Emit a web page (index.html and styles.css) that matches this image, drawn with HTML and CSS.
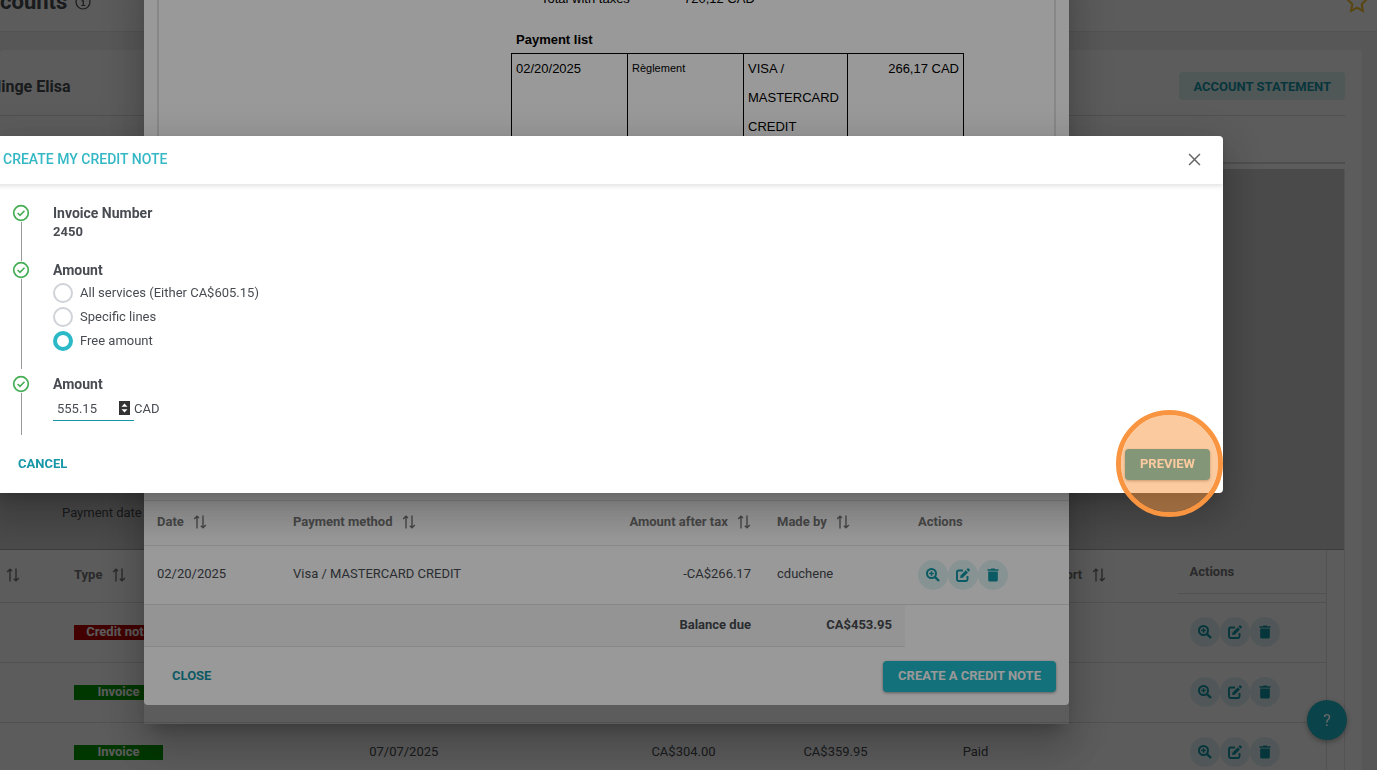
FILE: index.html
```html
<!DOCTYPE html>
<html lang="en">
<head>
  <meta charset="utf-8">
  <title>Create my credit note</title>
  <link rel="stylesheet" href="styles.css">
</head>
<body>

  <!-- shared icons -->
  <svg class="sprite" aria-hidden="true">
    <symbol id="sort" viewBox="0 0 14 14">
      <path d="M4 13.500V1.500M1.200 4L4 1.200L6 3M10 .5v12M7.800 10.800L10 12.800L12.800 10" fill="none" stroke="currentColor" stroke-width="1.400"/>
    </symbol>
    <symbol id="zoom" viewBox="0 0 14 14">
      <circle cx="5.500" cy="5.500" r="4.500" fill="none" stroke="currentColor" stroke-width="2"/>
      <path d="M8.800 8.800L13 13" stroke="currentColor" stroke-width="2.400"/>
      <path d="M5.500 3.200v4.600M3.200 5.500h4.600" stroke="currentColor" stroke-width="1.500"/>
    </symbol>
    <symbol id="edit" viewBox="0 0 14 14">
      <path d="M7 2.500H2.500Q1 2.500 1 4v7.500Q1 13 2.500 13H10q1.500 0 1.500-1.500V8" fill="none" stroke="currentColor" stroke-width="1.900"/>
      <path d="M4.500 7.500L9.800 2.200L12 4.400L6.700 9.700L4.200 10zM10.500 1.500L11.500.6Q12.200 0 12.900.7L13.500 1.300Q14.100 2 13.500 2.700L12.700 3.700z" fill="currentColor"/>
    </symbol>
    <symbol id="trash" viewBox="0 0 14 14">
      <path d="M1.500 1.300H4.800L5.300.5H8.700L9.200 1.300H12.500V2.700H1.500zM2.200 3.600H11.800V12Q11.800 13.500 10.300 13.500H3.700Q2.200 13.500 2.200 12z" fill="currentColor"/>
    </symbol>
    <symbol id="check" viewBox="0 0 18 18">
      <circle cx="9" cy="9" r="7.300" fill="none" stroke="currentColor" stroke-width="1.700"/>
      <path d="M5.600 9L8 11.300L12.500 6.800" fill="none" stroke="currentColor" stroke-width="1.600"/>
    </symbol>
  </svg>

  <div class="page">
    <header class="page-header">
      <h1>counts
        <svg class="info" viewBox="0 0 16 16"><circle cx="8" cy="8" r="7" fill="none" stroke="currentColor" stroke-width="1.200"/><path d="M6.500 6.800H8.300V11.500M6.300 11.500H10.200M8 3.800V5.200" fill="none" stroke="currentColor" stroke-width="1.200"/></svg>
      </h1>
      <svg class="star" viewBox="0 0 24 24"><path d="M12 2.500L14.900 8.600L21.600 9.500L16.700 14.100L17.900 20.800L12 17.600L6.100 20.800L7.300 14.100L2.400 9.500L9.100 8.600z" fill="none" stroke="currentColor" stroke-width="2"/></svg>
    </header>

    <main class="account">
      <div class="account-title">
        <h2>linge Elisa</h2>
        <button class="btn btn-light">ACCOUNT STATEMENT</button>
      </div>
      <div class="account-tabs"></div>
      <div class="account-content">
        <div class="filters">
          <span>Payment date</span>
        </div>
        <table class="grid operations">
          <colgroup>
            <col class="w-first"><col class="w-type"><col><col class="w-amount"><col class="w-total"><col class="w-status"><col class="w-export"><col class="w-actions">
          </colgroup>
          <thead>
            <tr>
              <th><svg class="sort"><use href="#sort"/></svg></th>
              <th>Type <svg class="sort"><use href="#sort"/></svg></th>
              <th></th>
              <th></th>
              <th></th>
              <th></th>
              <th class="right">Export <svg class="sort"><use href="#sort"/></svg></th>
              <th class="sticky"><div>Actions</div></th>
            </tr>
          </thead>
          <tbody>
            <tr>
              <td></td>
              <td><span class="tag tag-credit">Credit note</span></td>
              <td></td><td></td><td></td><td></td><td></td>
              <td>
                <div class="actions">
                  <button class="icon-btn" aria-label="View"><svg><use href="#zoom"/></svg></button>
                  <button class="icon-btn" aria-label="Edit"><svg><use href="#edit"/></svg></button>
                  <button class="icon-btn" aria-label="Delete"><svg><use href="#trash"/></svg></button>
                </div>
              </td>
            </tr>
            <tr>
              <td></td>
              <td><span class="tag tag-invoice">Invoice</span></td>
              <td></td><td></td><td></td><td></td><td></td>
              <td>
                <div class="actions">
                  <button class="icon-btn" aria-label="View"><svg><use href="#zoom"/></svg></button>
                  <button class="icon-btn" aria-label="Edit"><svg><use href="#edit"/></svg></button>
                  <button class="icon-btn" aria-label="Delete"><svg><use href="#trash"/></svg></button>
                </div>
              </td>
            </tr>
            <tr>
              <td></td>
              <td><span class="tag tag-invoice">Invoice</span></td>
              <td class="center">07/07/2025</td>
              <td class="center">CA$304.00</td>
              <td class="center">CA$359.95</td>
              <td class="center">Paid</td>
              <td></td>
              <td>
                <div class="actions">
                  <button class="icon-btn" aria-label="View"><svg><use href="#zoom"/></svg></button>
                  <button class="icon-btn" aria-label="Edit"><svg><use href="#edit"/></svg></button>
                  <button class="icon-btn" aria-label="Delete"><svg><use href="#trash"/></svg></button>
                </div>
              </td>
            </tr>
          </tbody>
        </table>
      </div>
    </main>
  </div>

  <div class="backdrop"></div>
  <button class="help" aria-label="Help">?</button>

  <!-- invoice dialog -->
  <div class="layer layer-top">
    <div class="dialog-shell">
      <section class="dialog invoice">
        <div class="preview">
          <div class="sheet">
            <div class="sheet-total"><span>Total with taxes</span><span>720,12 CAD</span></div>
            <h3>Payment list</h3>
            <table class="payments">
              <tr>
                <td>02/20/2025</td>
                <td class="small">Règlement</td>
                <td class="narrow">VISA / MASTERCARD CREDIT</td>
                <td class="right">266,17 CAD</td>
              </tr>
            </table>
          </div>
        </div>
        <table class="grid">
          <colgroup>
            <col class="w-date"><col><col class="w-after-tax"><col class="w-made-by"><col class="w-tools">
          </colgroup>
          <thead>
            <tr>
              <th>Date <svg class="sort"><use href="#sort"/></svg></th>
              <th>Payment method <svg class="sort"><use href="#sort"/></svg></th>
              <th class="right">Amount after tax <svg class="sort"><use href="#sort"/></svg></th>
              <th>Made by <svg class="sort"><use href="#sort"/></svg></th>
              <th>Actions</th>
            </tr>
          </thead>
          <tbody>
            <tr>
              <td>02/20/2025</td>
              <td>Visa / MASTERCARD CREDIT</td>
              <td class="right">-CA$266.17</td>
              <td>cduchene</td>
              <td class="tools">
                <div class="actions">
                  <button class="icon-btn" aria-label="View"><svg><use href="#zoom"/></svg></button>
                  <button class="icon-btn" aria-label="Edit"><svg><use href="#edit"/></svg></button>
                  <button class="icon-btn" aria-label="Delete"><svg><use href="#trash"/></svg></button>
                </div>
              </td>
            </tr>
            <tr class="balance">
              <td colspan="3" class="right">Balance due</td>
              <td class="right">CA$453.95</td>
            </tr>
          </tbody>
        </table>
        <footer class="dialog-footer">
          <button class="btn btn-text">CLOSE</button>
          <button class="btn btn-primary">CREATE A CREDIT NOTE</button>
        </footer>
      </section>
    </div>
  </div>

  <div class="backdrop"></div>

  <!-- credit note dialog -->
  <div class="layer">
    <form class="dialog credit">
      <header class="dialog-header">
        <h2>CREATE MY CREDIT NOTE</h2>
        <button type="button" class="close" aria-label="Close">
          <svg viewBox="0 0 12 12"><path d="M1 1L11 11M11 1L1 11" stroke="currentColor" stroke-width="1.400"/></svg>
        </button>
      </header>
      <div class="steps">
        <div class="step step-number">
          <div class="marker"><svg><use href="#check"/></svg></div>
          <div>
            <h3>Invoice Number</h3>
            <strong>2450</strong>
          </div>
        </div>
        <div class="step step-choice">
          <div class="marker"><svg><use href="#check"/></svg></div>
          <div>
            <h3>Amount</h3>
            <div class="choices">
              <label><input type="radio" name="mode"> <span>All services (Either CA$605.15)</span></label>
              <label><input type="radio" name="mode"> <span>Specific lines</span></label>
              <label><input type="radio" name="mode" checked> <span>Free amount</span></label>
            </div>
          </div>
        </div>
        <div class="step step-amount">
          <div class="marker"><svg><use href="#check"/></svg></div>
          <div>
            <h3><label for="amount">Amount</label></h3>
            <div class="amount">
              <div class="amount-field">
                <input type="number" id="amount" step="0.01" value="555.15">
                <svg viewBox="0 0 11 14"><path d="M0 0H11V14H0z" fill="#333"/><path d="M5.500 2.500L8.500 5.800H2.500zM5.500 11.500L8.500 8.200H2.500z" fill="#fff"/></svg>
              </div>
              <span>CAD</span>
            </div>
          </div>
        </div>
      </div>
      <footer class="dialog-footer">
        <button type="button" class="btn btn-text">CANCEL</button>
        <button type="button" class="btn btn-primary active">PREVIEW</button>
      </footer>
      <div class="click-marker"></div>
    </form>
  </div>

</body>
</html>
```
FILE: styles.css
```css
* {
  box-sizing: border-box;
}

body {
  margin: 0;
  height: 100vh;
  overflow: hidden;
  background: #f3f3f3;
  color: #484c52;
  font-family: Roboto, Arial, sans-serif;
  font-size: 13px;
}

h1, h2, h3 {
  margin: 0;
}

button, input {
  font-family: inherit;
  font-size: inherit;
  color: inherit;
}

button {
  border: none;
  background: none;
  padding: 0;
  cursor: pointer;
}

.sprite {
  display: none;
}

/* buttons */

.btn {
  height: 31px;
  padding: 0 15px 2px;
  border-radius: 4px;
  font-weight: 700;
}

.btn-text {
  color: #1797a8;
}

.btn-light {
  height: 28px;
  padding: 0 14px;
  background: #dcf2f4;
  color: #1797a8;
}

.btn-primary {
  background: #1fbccb;
  color: #fff;
  box-shadow: 0 1px 3px rgba(0, 0, 0, 0.4);
}

.btn-primary.active {
  background: #0d97b0;
}

.actions {
  display: flex;
}

.icon-btn {
  display: flex;
  align-items: center;
  justify-content: center;
  width: 30px;
  height: 30px;
  border-radius: 50%;
  background: #e2f4f5;
  color: #0f96a6;
}

.icon-btn svg {
  width: 14px;
  height: 14px;
}

/* page behind the dialogs, scrolled down a little */

.page {
  margin-top: -28px;
}

.page-header {
  display: flex;
  align-items: center;
  justify-content: space-between;
  height: 60px;
  padding-right: 8px;
  background: #fff;
  border-bottom: 1px solid #e8e8e8;
}

.page-header h1 {
  display: flex;
  align-items: center;
  gap: 8px;
  font-size: 22px;
}

.info {
  width: 16px;
  height: 16px;
}

.star {
  width: 24px;
  height: 24px;
  color: #f7c02c;
}

.account {
  margin: 18px 15px 0 0;
  padding-right: 17px;
  background: #fff;
  border-radius: 4px;
}

.account-title {
  display: flex;
  align-items: center;
  justify-content: space-between;
  height: 66px;
  padding-top: 7px;
  border-bottom: 1px solid #e0e0e0;
}

.account-title h2 {
  margin-left: -3px;
  font-size: 16px;
}

.account-tabs {
  height: 48px;
  border-bottom: 2px solid #dadada;
}

.account-content {
  margin-top: 5px;
  padding-right: 17px;
  border-right: 1px solid #e6e6e6;
}

.filters {
  display: flex;
  align-items: flex-end;
  height: 381px;
  margin-right: -17px;
  padding: 0 62px 29px;
  background: #cfcfcf;
  border-bottom: 1px solid #aaa;
}

/* data tables */

.grid {
  width: 100%;
  table-layout: fixed;
  border-collapse: collapse;
}

.grid th,
.grid td {
  height: 60px;
  padding: 0 12px;
  border-bottom: 1px solid #e2e2e2;
  text-align: left;
}

.grid th {
  height: 44px;
  color: #777;
  white-space: nowrap;
}

.grid .right {
  text-align: right;
}

.grid .center {
  padding-bottom: 2px;
  text-align: center;
}

.sort {
  width: 14px;
  height: 14px;
  margin-left: 6px;
  vertical-align: -3px;
}

.operations {
  border-right: 1px solid #e2e2e2;
}

.operations th {
  height: 52px;
  padding-bottom: 2px;
}

.operations th:first-child {
  padding-left: 0;
}

.operations th.right {
  padding-right: 72px;
}

.operations .sticky {
  padding: 0;
  vertical-align: top;
}

.sticky div {
  padding: 14px 12px;
  border-bottom: 1px solid #e2e2e2;
}

.w-first { width: 62px; }
.w-type { width: 113px; }
.w-amount { width: 102px; }
.w-total { width: 202px; }
.w-status { width: 78px; }
.w-export { width: 163px; }
.w-actions { width: 149px; }

.tag {
  display: block;
  height: 15px;
  line-height: 14px;
  color: #fff;
  font-weight: 700;
  text-align: center;
}

.tag-credit {
  background: #b80000;
}

.tag-invoice {
  background: #009900;
}

.help {
  position: fixed;
  right: 30px;
  bottom: 30px;
  width: 40px;
  height: 40px;
  border-radius: 50%;
  background: #12707a;
  color: #b0b0b0;
  font-size: 16px;
  box-shadow: 0 2px 5px rgba(0, 0, 0, 0.3);
}

/* dialogs */

.backdrop {
  position: fixed;
  inset: 0;
  background: rgba(0, 0, 0, 0.4);
}

.layer {
  position: fixed;
  inset: 0 164px 0 0;
  display: flex;
  align-items: flex-start;
  justify-content: center;
  padding-top: 136px;
}

.layer-top {
  padding-top: 0;
}

.dialog-shell,
.credit {
  box-shadow: 0 11px 15px -7px rgba(0, 0, 0, 0.2), 0 24px 38px 3px rgba(0, 0, 0, 0.14), 0 9px 46px 8px rgba(0, 0, 0, 0.12);
}

.dialog {
  background: #fff;
  border-radius: 4px;
}

.dialog-shell {
  flex: none;
  width: 925px;
  margin-top: -40px;
  padding-bottom: 19px;
}

.preview {
  padding: 0 13px;
  border-bottom: 1px solid #e2e2e2;
}

.sheet {
  height: 532px;
  margin-bottom: 8px;
  padding: 24px 90px 0 352px;
  border: 2px solid #e2e2e2;
  border-top: none;
  color: #000;
  font-family: "Liberation Sans", Arial, sans-serif;
  line-height: 29px;
}

.sheet-total {
  display: grid;
  grid-template-columns: 143px 1fr;
  padding-left: 30px;
}

.sheet h3 {
  margin-top: 13px;
  padding-left: 5px;
  font-size: 13px;
  line-height: 27px;
}

.payments {
  width: 100%;
  border-collapse: collapse;
}

.payments td {
  width: 116px;
  padding: 0 4px;
  border: 1px solid #000;
  vertical-align: top;
}

.payments .small {
  font-size: 11px;
}

.payments .narrow {
  width: 104px;
}

.payments .right {
  text-align: right;
}

.invoice .grid th,
.invoice .grid td {
  padding: 0 13px 2px;
}

.invoice .grid td {
  height: 59px;
}

.invoice .grid .tools {
  padding-bottom: 0;
}

.invoice .grid .balance td {
  height: 42px;
  background: #f7f7f7;
  font-weight: 700;
}

.w-date { width: 136px; }
.w-after-tax { width: 200px; }
.w-made-by { width: 141px; }
.w-tools { width: 164px; }

.dialog-footer {
  display: flex;
  justify-content: space-between;
  padding: 14px 13px 13px;
}

.credit {
  position: relative;
  flex: none;
  width: 1233px;
}

.dialog-header {
  display: flex;
  align-items: center;
  justify-content: space-between;
  height: 48px;
  padding: 0 22px 2px 13px;
  border-radius: 4px 4px 0 0;
  box-shadow: 0 2px 5px rgba(0, 0, 0, 0.12);
}

.dialog-header h2 {
  color: #34b8c5;
  font-size: 14px;
  font-weight: 500;
}

.close {
  width: 13px;
  height: 13px;
  color: #666;
}

.close svg {
  display: block;
}

.steps {
  padding: 20px 22px 0;
}

.step {
  display: flex;
  gap: 23px;
}

.step h3 {
  font-size: 14px;
  line-height: 18px;
}

.step strong {
  display: block;
  line-height: 20px;
}

.marker {
  display: flex;
  flex-direction: column;
  align-items: center;
  width: 18px;
}

.marker svg {
  width: 18px;
  height: 18px;
  color: #45ad54;
}

.marker::after {
  content: "";
  flex: 1;
  width: 1px;
  background: #999;
}

.step-number > div:last-child {
  padding-bottom: 19px;
}

.step-choice {
  margin-bottom: 6px;
}

.step-choice > div:last-child {
  padding-bottom: 16px;
}

.step-amount > div:last-child {
  padding-bottom: 14px;
}

.choices {
  margin-top: 2px;
}

.choices label {
  display: flex;
  align-items: center;
  gap: 7px;
  height: 24px;
}

.choices span {
  padding-bottom: 2px;
}

.choices input {
  appearance: none;
  width: 20px;
  height: 20px;
  margin: 0;
  border: 2px solid #cfd3d8;
  border-radius: 50%;
}

.choices input:checked {
  border: 4px solid #2bb9c8;
}

.amount {
  display: flex;
  align-items: center;
  margin-top: 3px;
}

.amount-field {
  display: flex;
  align-items: center;
  width: 81px;
  height: 25px;
  padding: 0 4px;
  border-bottom: 1px solid #1797a8;
}

.amount-field input {
  flex: 1;
  min-width: 0;
  padding: 0;
  border: none;
  outline: none;
  background: none;
  appearance: textfield;
}

.amount-field input::-webkit-inner-spin-button {
  display: none;
}

.amount-field svg {
  width: 11px;
  height: 14px;
}

.click-marker {
  position: absolute;
  right: 0;
  bottom: -24px;
  width: 107px;
  height: 107px;
  border: 5px solid #f99540;
  border-radius: 50%;
  background: rgba(250, 150, 64, 0.5);
  background-clip: padding-box;
  pointer-events: none;
}
```
